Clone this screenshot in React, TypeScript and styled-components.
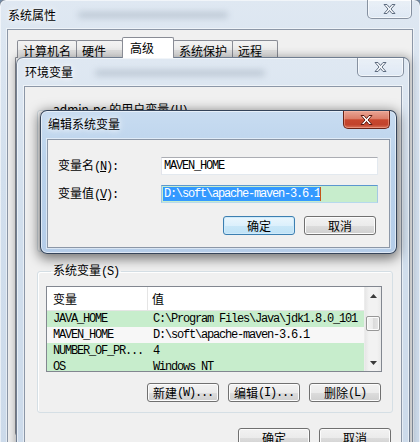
import styled, { createGlobalStyle } from 'styled-components'

const GlobalStyle = createGlobalStyle`
  html, body { margin: 0; padding: 0; }
  body {
    width: 420px;
    height: 442px;
    overflow: hidden;
    font-family: "Noto Sans CJK SC", "Liberation Sans", sans-serif;
    font-size: 12px;
    color: #000;
  }
  * { box-sizing: border-box; }
`

const Desktop = styled.div`
  position: relative;
  width: 420px;
  height: 442px;
  overflow: hidden;
  background: #7f9fc0;
`

type WinProps = {
  $x: number
  $y: number
  $w: number
  $h: number
  $side: number
  $bottom?: number
  $active?: boolean
  $radius?: string
}

// windows sit on a desktop, so they are placed by coordinates
const Window = styled.div<WinProps>`
  position: absolute;
  left: ${p => p.$x}px;
  top: ${p => p.$y}px;
  width: ${p => p.$w}px;
  height: ${p => p.$h}px;
  display: flex;
  flex-direction: column;
  padding: 0 ${p => p.$side}px ${p => p.$bottom ?? 0}px;
  border: 1px solid ${p => (p.$active ? 'rgba(28, 42, 64, 0.85)' : 'rgba(62, 76, 96, 0.65)')};
  border-radius: ${p => p.$radius ?? '7px 7px 0 0'};
  background: ${p =>
    p.$active
      ? 'linear-gradient(180deg, #c8dcf1 0%, #bad2eb 35%, #b5cde9 100%)'
      : 'linear-gradient(180deg, #dfe8f2 0%, #d2dfed 40%, #ccdaea 100%)'};
  box-shadow: ${p =>
    p.$active
      ? 'inset 0 0 0 1px rgba(255,255,255,0.55), 0 3px 12px 2px rgba(0,0,0,0.5)'
      : 'inset 0 0 0 1px rgba(255,255,255,0.55), 0 0 8px 1px rgba(0,0,0,0.3)'};
`

const TitleBar = styled.div<{ $h: number }>`
  height: ${p => p.$h}px;
  flex-shrink: 0;
  display: flex;
  align-items: flex-start;
`

const Title = styled.div<{ $top: number }>`
  padding: ${p => p.$top}px 0 0 1px;
  line-height: 14px;
  white-space: nowrap;
  text-shadow: 0 0 5px rgba(255, 255, 255, 0.95), 0 0 10px rgba(255, 255, 255, 0.85);
`

const Smudge = styled.span<{ $w: number }>`
  display: block;
  width: ${p => p.$w}px;
  height: 6px;
  margin: 12px 0 0 22px;
  border-radius: 3px;
  background: rgba(70, 85, 110, 0.22);
  filter: blur(3px);
`

const CloseButton = styled.div<{ $active?: boolean; $w: number; $h: number; $right: number }>`
  margin-left: auto;
  margin-right: ${p => p.$right}px;
  width: ${p => p.$w}px;
  height: ${p => p.$h}px;
  display: flex;
  align-items: center;
  justify-content: center;
  border: 1px solid ${p => (p.$active ? '#6a2316' : 'rgba(70, 84, 104, 0.6)')};
  border-top: none;
  border-radius: 0 0 5px 5px;
  background: ${p =>
    p.$active
      ? 'linear-gradient(180deg, #e9a595 0%, #dc7e69 45%, #c8472e 52%, #c2432b 80%, #d9735a 100%)'
      : 'linear-gradient(180deg, rgba(255,255,255,0.35) 0%, rgba(235,242,250,0.5) 50%, rgba(220,232,245,0.5) 100%)'};
  box-shadow: inset 0 0 0 1px ${p => (p.$active ? 'rgba(255,190,170,0.45)' : 'rgba(255,255,255,0.6)')};
`

function CloseGlyph({ active }: { active?: boolean }) {
  return (
    <svg width="13" height="10" viewBox="0 0 13 10">
      <path
        d="M1 0.5h3l2.5 3 2.5-3h3l-4 4.5 4 4.5h-3l-2.5-3-2.5 3h-3l4-4.5z"
        fill={active ? '#ffffff' : '#f6f8fb'}
        stroke={active ? '#5c1a10' : '#5f6d80'}
        strokeWidth="1"
        strokeLinejoin="round"
      />
    </svg>
  )
}

const Client = styled.div`
  flex: 1;
  min-height: 0;
  display: flex;
  flex-direction: column;
  overflow: hidden;
  background: #f0f0f0;
  border: 1px solid rgba(74, 92, 118, 0.6);
  box-shadow: 0 0 0 1px rgba(255, 255, 255, 0.5);
`

const Mono = styled.span`
  font-family: "Liberation Mono", "DejaVu Sans Mono", monospace;
  font-size: 12px;
  letter-spacing: -1.2px;
`

/* ---------- system properties (back window) ---------- */

const TabStrip = styled.div`
  display: flex;
  align-items: flex-end;
  margin-top: 7px;
  padding-left: 10px;
  height: 21px;
  flex-shrink: 0;
`

const Tab = styled.div<{ $w: number; $selected?: boolean }>`
  width: ${p => p.$w}px;
  height: ${p => (p.$selected ? 21 : 18)}px;
  margin-left: -1px;
  padding: ${p => (p.$selected ? '3px 0 0 7px' : '3px 0 0 5px')};
  line-height: 14px;
  border: 1px solid #898c95;
  border-bottom: none;
  border-radius: 2px 2px 0 0;
  background: ${p => (p.$selected ? '#ffffff' : 'linear-gradient(180deg, #f3f3f3 0%, #ebebeb 50%, #dedede 51%, #e6e6e6 100%)')};
  position: relative;
  z-index: ${p => (p.$selected ? 1 : 0)};
`

const TabPanel = styled.div`
  margin: -1px 7px 0;
  height: 379px;
  border: 1px solid #898c95;
  border-radius: 0 0 3px 3px;
  background: #fcfcfd;
`

/* ---------- environment variables window ---------- */

const EnvBody = styled(Client)`
  padding: 15px 8px 0 12px;
`

const Group = styled.fieldset<{ $gap?: number }>`
  margin: ${p => p.$gap ?? 0}px 0 0;
  padding: 7px 10px 10px 8px;
  min-width: 0;
  border: 1px solid #d5dfe5;
  border-radius: 3px;
  box-shadow: inset 1px 1px 0 #fff;
  display: flex;
  flex-direction: column;
`

const Legend = styled.legend`
  margin-left: 5px;
  padding: 0 2px;
  line-height: 14px;
  color: #000;
`

const ListBox = styled.div`
  height: 86px;
  display: flex;
  border: 1px solid #828790;
  background: #fff;
  overflow: hidden;
`

const ListBody = styled.div`
  flex: 1;
  min-width: 0;
  display: flex;
  flex-direction: column;
`

const HeaderRow = styled.div`
  height: 24px;
  flex-shrink: 0;
  display: flex;
  background: #fff;
  border-bottom: 1px solid #e5e5e5;
`

const HeaderCell = styled.div<{ $w?: number }>`
  ${p => (p.$w ? `width: ${p.$w}px; flex-shrink: 0;` : 'flex: 1;')}
  display: flex;
  align-items: center;
  padding-left: ${p => (p.$w ? 6 : 4)}px;
  border-right: ${p => (p.$w ? '1px solid #e5e5e5' : 'none')};
  line-height: 14px;
`

const Row = styled.div<{ $plain?: boolean }>`
  height: 16px;
  flex-shrink: 0;
  display: flex;
  align-items: center;
  background: ${p => (p.$plain ? '#f7f7f7' : '#c7edcc')};
  white-space: nowrap;
`

const Cell = styled(Mono)<{ $w?: number }>`
  ${p => (p.$w ? `width: ${p.$w}px; flex-shrink: 0;` : 'flex: 1;')}
  padding-left: ${p => (p.$w ? 6 : 5)}px;
  overflow: hidden;
  line-height: 14px;
`

const ScrollBar = styled.div`
  width: 17px;
  flex-shrink: 0;
  display: flex;
  flex-direction: column;
  background: linear-gradient(90deg, #e6e6e6 0%, #f2f2f2 25%, #f2f2f2 75%, #e9e9e9 100%);
  border-left: 1px solid #ececec;
`

const ScrollArrow = styled.div`
  height: 17px;
  flex-shrink: 0;
  display: flex;
  align-items: center;
  justify-content: center;
`

const ScrollTrack = styled.div`
  flex: 1;
  padding: 12px 1px 0;
`

const Thumb = styled.div`
  height: 15px;
  border: 1px solid #979797;
  border-radius: 2px;
  background: linear-gradient(90deg, #f4f4f4 0%, #ebebeb 50%, #dadada 51%, #e6e6e6 100%);
  box-shadow: inset 0 0 0 1px #fbfbfb;
`

const ButtonRow = styled.div<{ $top: number; $right: number }>`
  display: flex;
  justify-content: flex-end;
  gap: 9px;
  margin-top: ${p => p.$top}px;
  padding-right: ${p => p.$right}px;
  flex-shrink: 0;
`

const Button = styled.button<{ $default?: boolean }>`
  width: 72px;
  height: 19px;
  padding: 0;
  display: flex;
  align-items: center;
  justify-content: center;
  font: inherit;
  line-height: 14px;
  color: #000;
  border: 1px solid ${p => (p.$default ? '#3c7fb1' : '#707070')};
  border-radius: 3px;
  background: ${p =>
    p.$default
      ? 'linear-gradient(180deg, #eaf6fd 0%, #dcf0fc 50%, #c9e7f8 51%, #bfe2f6 100%)'
      : 'linear-gradient(180deg, #f2f2f2 0%, #ebebeb 50%, #dddddd 51%, #cfcfcf 100%)'};
  box-shadow: inset 0 0 0 1px ${p => (p.$default ? '#cfeafa' : '#fcfcfc')};
`

/* ---------- edit variable dialog ---------- */

const EditBody = styled(Client)`
  padding: 17px 13px 0 10px;
`

const FieldGrid = styled.div`
  display: grid;
  grid-template-columns: 103px 217px;
  row-gap: 10px;
  align-items: center;
`

const FieldLabel = styled.div`
  line-height: 14px;
  white-space: nowrap;
`

const TextBox = styled.div<{ $focused?: boolean }>`
  height: 18px;
  padding: 1px 1px 1px 2px;
  display: flex;
  align-items: center;
  white-space: nowrap;
  overflow: hidden;
  border: 1px solid;
  border-color: ${p =>
    p.$focused ? '#5b97cf #a4c9e3 #b7d9ed #9fc3e6' : '#abadb3 #e3e9ef #e3e9ef #e2e3ea'};
  background: ${p => (p.$focused ? '#c7edcc' : '#ffffff')};
`

const Selection = styled(Mono)`
  margin-left: -1px;
  padding-left: 1px;
  line-height: 14px;
  height: 14px;
  color: #fff;
  background: #3399ff;
`

const Caret = styled.span`
  width: 1px;
  height: 14px;
  background: #c4561a;
`

const TextValue = styled(Mono)`
  line-height: 14px;
`

type Variable = { name: string; value: string; plain?: boolean }

const userVars: Variable[] = [
  { name: 'TEMP', value: '%USERPROFILE%\\AppData\\Local\\Temp' },
  { name: 'TMP', value: '%USERPROFILE%\\AppData\\Local\\Temp' },
]

const systemVars: Variable[] = [
  { name: 'JAVA_HOME', value: 'C:\\Program Files\\Java\\jdk1.8.0_101' },
  { name: 'MAVEN_HOME', value: 'D:\\soft\\apache-maven-3.6.1', plain: true },
  { name: 'NUMBER_OF_PR...', value: '4' },
  { name: 'OS', value: 'Windows_NT' },
]

function Arrow({ down }: { down?: boolean }) {
  return (
    <svg width="7" height="4" viewBox="0 0 7 4">
      <polygon points={down ? '0,0 7,0 3.5,4' : '0,4 7,4 3.5,0'} fill="#3b3b3b" />
    </svg>
  )
}

function VarList({ rows }: { rows: Variable[] }) {
  return (
    <ListBox>
      <ListBody>
        <HeaderRow>
          <HeaderCell $w={101}>变量</HeaderCell>
          <HeaderCell>值</HeaderCell>
        </HeaderRow>
        {rows.map(r => (
          <Row key={r.name} $plain={r.plain}>
            <Cell $w={101}>{r.name}</Cell>
            <Cell>{r.value}</Cell>
          </Row>
        ))}
      </ListBody>
      <ScrollBar>
        <ScrollArrow>
          <Arrow />
        </ScrollArrow>
        <ScrollTrack>
          <Thumb />
        </ScrollTrack>
        <ScrollArrow>
          <Arrow down />
        </ScrollArrow>
      </ScrollBar>
    </ListBox>
  )
}

function VarGroup({ label, keyChar, rows, gap }: { label: string; keyChar: string; rows: Variable[]; gap?: number }) {
  return (
    <Group $gap={gap}>
      <Legend>
        {label}
        <Mono>({keyChar})</Mono>
      </Legend>
      <VarList rows={rows} />
      <ButtonRow $top={11} $right={1}>
        <Button>新建<Mono>(W)...</Mono></Button>
        <Button>编辑<Mono>(I)...</Mono></Button>
        <Button>删除<Mono>(L)</Mono></Button>
      </ButtonRow>
    </Group>
  )
}

export default function App() {
  return (
    <Desktop>
      <GlobalStyle />

      <Window $x={-1} $y={-1} $w={422} $h={446} $side={7}>
        <TitleBar $h={29}>
          <Title $top={8}>系统属性</Title>
          <Smudge $w={150} />
          <CloseButton $w={45} $h={19} $right={1}>
            <CloseGlyph />
          </CloseButton>
        </TitleBar>
        <Client>
          <TabStrip>
            <Tab $w={60}>计算机名</Tab>
            <Tab $w={47}>硬件</Tab>
            <Tab $w={52} $selected>高级</Tab>
            <Tab $w={60}>系统保护</Tab>
            <Tab $w={46}>远程</Tab>
          </TabStrip>
          <TabPanel />
        </Client>
      </Window>

      <Window $x={16} $y={57} $w={394} $h={400} $side={7}>
        <TitleBar $h={28}>
          <Title $top={7}>环境变量</Title>
          <Smudge $w={170} />
          <CloseButton $w={47} $h={19} $right={-2}>
            <CloseGlyph />
          </CloseButton>
        </TitleBar>
        <EnvBody>
          <VarGroup label="admin-pc 的用户变量" keyChar="U" rows={userVars} />
          <VarGroup label="系统变量" keyChar="S" rows={systemVars} gap={11} />
          <ButtonRow $top={15} $right={2}>
            <Button>确定</Button>
            <Button>取消</Button>
          </ButtonRow>
        </EnvBody>
      </Window>

      <Window $x={40} $y={110} $w={357} $h={144} $side={6} $bottom={5} $active $radius="7px">
        <TitleBar $h={28}>
          <Title $top={6}>编辑系统变量</Title>
          <CloseButton $w={47} $h={18} $right={0} $active>
            <CloseGlyph active />
          </CloseButton>
        </TitleBar>
        <EditBody>
          <FieldGrid>
            <FieldLabel>
              变量名<Mono>(<u>N</u>):</Mono>
            </FieldLabel>
            <TextBox>
              <TextValue>MAVEN_HOME</TextValue>
            </TextBox>
            <FieldLabel>
              变量值<Mono>(<u>V</u>):</Mono>
            </FieldLabel>
            <TextBox $focused>
              <Selection>D:\soft\apache-maven-3.6.1</Selection>
              <Caret />
            </TextBox>
          </FieldGrid>
          <ButtonRow $top={13} $right={0}>
            <Button $default>确定</Button>
            <Button>取消</Button>
          </ButtonRow>
        </EditBody>
      </Window>
    </Desktop>
  )
}
